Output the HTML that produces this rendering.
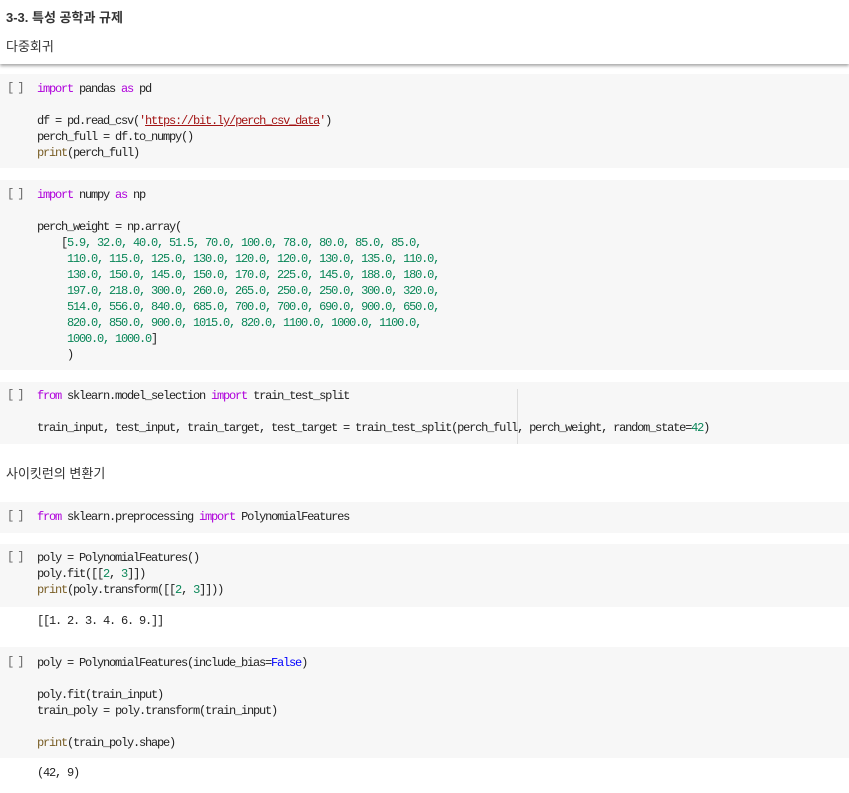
<!DOCTYPE html>
<html><head><meta charset="utf-8"><style>
body{margin:0;width:849px;height:793px;background:#fff;position:relative;overflow:hidden;font-family:"Liberation Sans","Noto Sans CJK KR",sans-serif;}
.hdr{position:absolute;left:0;top:0;width:849px;height:64px;background:#fff;box-shadow:0 2px 3px rgba(0,0,0,.35);z-index:2}
.t1{position:absolute;left:6px;top:7px;font-size:13px;font-weight:bold;color:#333}
.t2{position:absolute;left:6px;top:36px;font-size:13px;color:#333}
.cell{position:absolute;left:0;width:849px;background:#f7f7f7}
pre{margin:0;position:absolute;left:37px;font-family:"Liberation Mono",monospace;font-size:12px;letter-spacing:-1.2px;line-height:16px;color:#222}
.br{position:absolute;left:7px;font-family:"Liberation Mono",monospace;font-size:12px;letter-spacing:-2px;color:#666}
.k{color:#af00db}.s{color:#a31515;text-decoration:underline}.q{color:#a31515}.n{color:#098658}.f{color:#795e26}.b{color:#0000ff}
.txt{position:absolute;left:6px;font-size:13px;color:#333}
</style></head><body>
<div class="hdr"><div class="t1">3-3. 특성 공학과 규제</div><div class="t2">다중회귀</div></div>

<div class="cell" style="top:74px;height:94px"></div>
<div class="br" style="top:81px">[ ]</div>
<pre style="top:81px"><span class="k">import</span> pandas <span class="k">as</span> pd

df = pd.read_csv(<span class="q">'</span><span class="s">https://bit.ly/perch_csv_data</span><span class="q">'</span>)
perch_full = df.to_numpy()
<span class="f">print</span>(perch_full)</pre>

<div class="cell" style="top:180px;height:190px"></div>
<div class="br" style="top:187px">[ ]</div>
<pre style="top:187px"><span class="k">import</span> numpy <span class="k">as</span> np

perch_weight = np.array(
    [<span class="n">5.9, 32.0, 40.0, 51.5, 70.0, 100.0, 78.0, 80.0, 85.0, 85.0,</span>
     <span class="n">110.0, 115.0, 125.0, 130.0, 120.0, 120.0, 130.0, 135.0, 110.0,</span>
     <span class="n">130.0, 150.0, 145.0, 150.0, 170.0, 225.0, 145.0, 188.0, 180.0,</span>
     <span class="n">197.0, 218.0, 300.0, 260.0, 265.0, 250.0, 250.0, 300.0, 320.0,</span>
     <span class="n">514.0, 556.0, 840.0, 685.0, 700.0, 700.0, 690.0, 900.0, 650.0,</span>
     <span class="n">820.0, 850.0, 900.0, 1015.0, 820.0, 1100.0, 1000.0, 1100.0,</span>
     <span class="n">1000.0, 1000.0</span>]
     )</pre>

<div class="cell" style="top:382px;height:62px"></div>
<div style="position:absolute;left:517px;top:389px;width:1px;height:55px;background:#ddd"></div>
<div class="br" style="top:388px">[ ]</div>
<pre style="top:388px"><span class="k">from</span> sklearn.model_selection <span class="k">import</span> train_test_split

train_input, test_input, train_target, test_target = train_test_split(perch_full, perch_weight, random_state=<span class="n">42</span>)</pre>

<div class="txt" style="top:463px">사이킷런의 변환기</div>

<div class="cell" style="top:502px;height:31px"></div>
<div class="br" style="top:509px">[ ]</div>
<pre style="top:509px"><span class="k">from</span> sklearn.preprocessing <span class="k">import</span> PolynomialFeatures</pre>

<div class="cell" style="top:544px;height:63px"></div>
<div class="br" style="top:550px">[ ]</div>
<pre style="top:550px">poly = PolynomialFeatures()
poly.fit([[<span class="n">2</span>, <span class="n">3</span>]])
<span class="f">print</span>(poly.transform([[<span class="n">2</span>, <span class="n">3</span>]]))</pre>
<pre style="top:613px">[[1. 2. 3. 4. 6. 9.]]</pre>

<div class="cell" style="top:647px;height:111px"></div>
<div class="br" style="top:655px">[ ]</div>
<pre style="top:655px">poly = PolynomialFeatures(include_bias=<span class="b">False</span>)

poly.fit(train_input)
train_poly = poly.transform(train_input)

<span class="f">print</span>(train_poly.shape)</pre>
<pre style="top:765px">(42, 9)</pre>
</body></html>
